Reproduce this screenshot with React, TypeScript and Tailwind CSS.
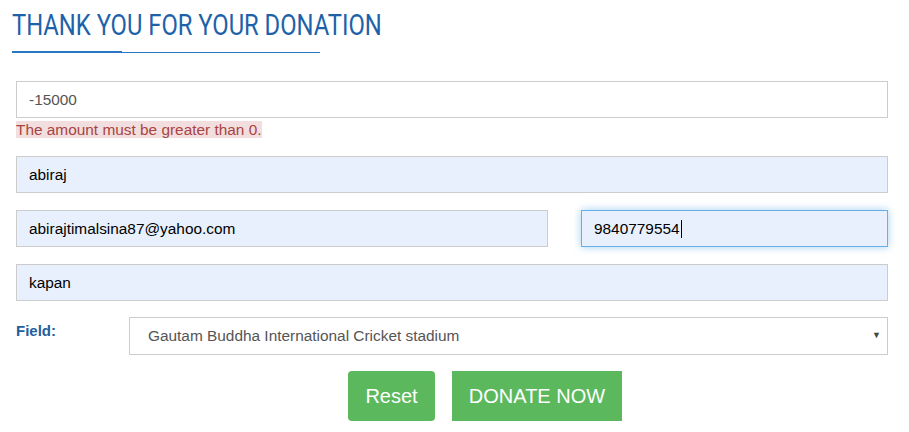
const inputBase =
  "h-[37px] w-full border border-[#ccc] px-3 text-[15.4px] outline-none"

export default function App() {
  return (
    <main className="min-h-screen w-[909px] bg-white pl-3 pr-[21px] pt-[9px] font-['Liberation_Sans',Arial,sans-serif]">
      <h1 className="origin-left scale-x-[0.82] font-['Roboto',sans-serif] text-[29px] leading-[32px] font-normal text-[#1d62a9]">
        THANK YOU FOR YOUR DONATION
      </h1>
      <div className="mt-[10px] flex items-center">
        <div className="h-[2px] w-[110px] bg-[#2a76c2]" />
        <div className="h-px w-[198px] bg-[#2a76c2]" />
      </div>

      <form className="mt-[28px] pl-1">
        <input className={`${inputBase} bg-white text-[#555]`} defaultValue="-15000" />
        <p className="mt-[3px] w-fit bg-[#f2dede] text-[15.4px] leading-[17px] text-[#a94442]">
          The amount must be greater than 0.
        </p>

        <input className={`${inputBase} mt-[18px] bg-[#e8f0fe] text-black`} defaultValue="abiraj" />

        <div className="mt-[17px] flex gap-[33px]">
          <input
            className={`${inputBase} !w-[532px] shrink-0 bg-[#e8f0fe] text-black`}
            defaultValue="abirajtimalsina87@yahoo.com"
          />
          <div className="flex h-[37px] flex-1 items-center border border-[#66afe9] bg-[#e8f0fe] px-3 text-[15.4px] text-black shadow-[0_0_8px_rgba(102,175,233,0.6)]">
            9840779554
            <span className="ml-px h-[18px] w-px bg-black" />
          </div>
        </div>

        <input className={`${inputBase} mt-[17px] bg-[#e8f0fe] text-black`} defaultValue="kapan" />

        <div className="mt-[16px] flex">
          <label className="w-[113px] shrink-0 pt-[3px] text-[15px] font-bold text-[#23609e]">Field:</label>
          <div className="flex h-[38px] flex-1 items-center justify-between border border-[#ccc] bg-white pl-[18px] pr-[6px] text-[15.4px] text-[#555]">
            <span>Gautam Buddha International Cricket stadium</span>
            <span className="text-[9px] text-[#444]">▼</span>
          </div>
        </div>

        <div className="mt-[16px] flex gap-[17px] pl-[332px]">
          <button
            type="button"
            className="h-[50px] w-[87px] rounded-[4px] bg-[#5cb85c] text-[20px] text-white"
          >
            Reset
          </button>
          <button type="button" className="h-[50px] w-[170px] bg-[#5cb85c] text-[20px] text-white">
            DONATE NOW
          </button>
        </div>
      </form>
    </main>
  )
}
